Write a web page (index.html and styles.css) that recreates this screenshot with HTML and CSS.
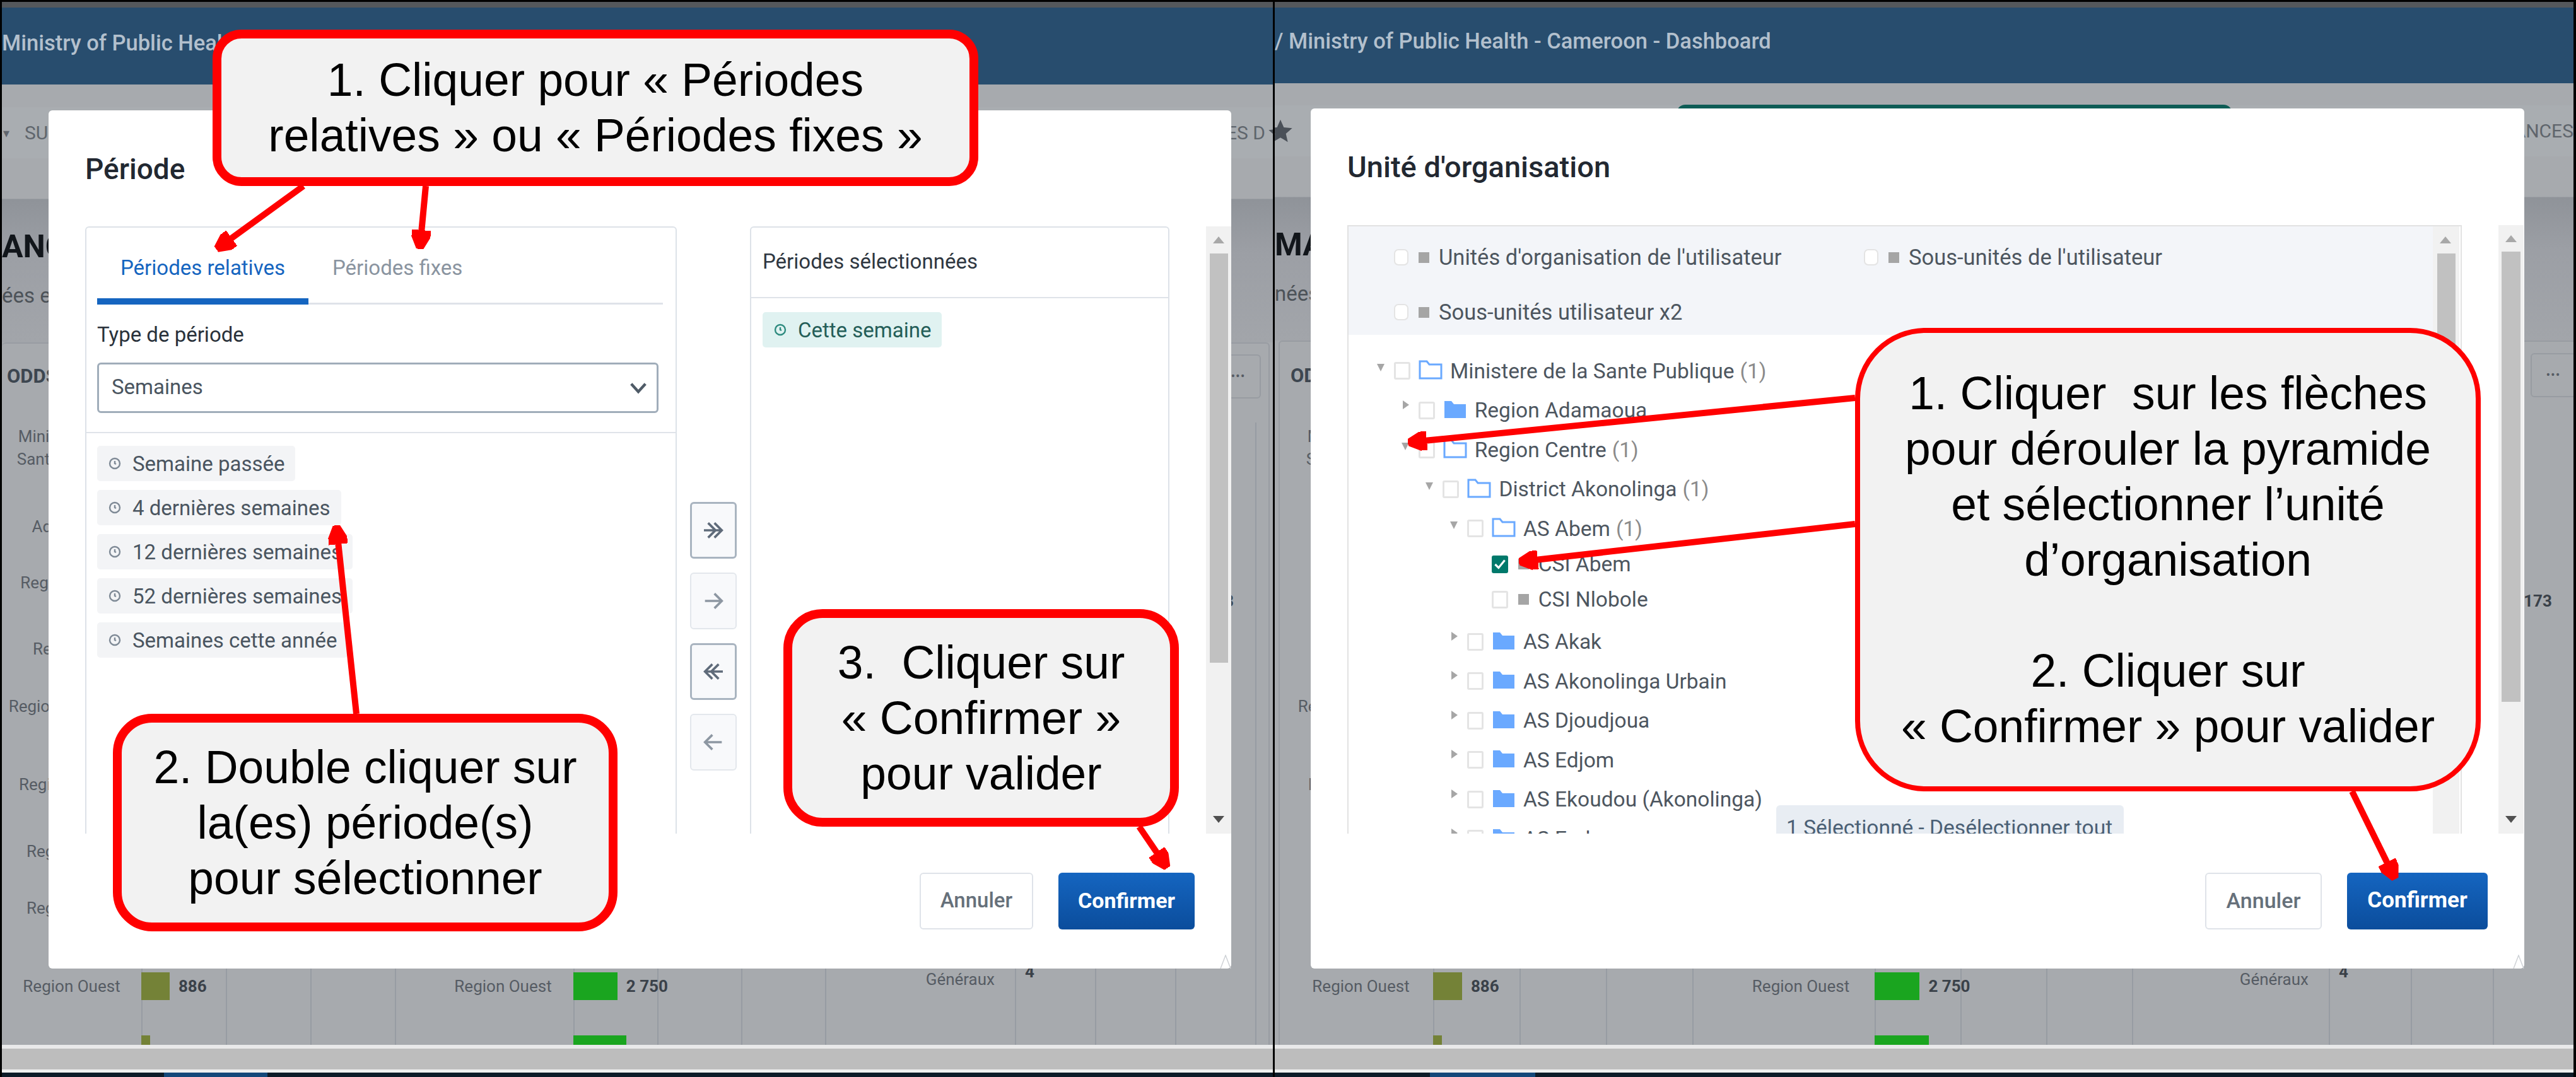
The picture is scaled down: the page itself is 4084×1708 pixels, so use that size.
FILE: index.html
```html
<!DOCTYPE html>
<html lang="fr">
<head>
  <meta charset="utf-8">
  <title>Sélection de la période et de l'unité d'organisation</title>
  <link rel="stylesheet" href="styles.css">
</head>
<body>
<div class="page">

  <!-- LEFT SCREEN : period dialog -->
  <section class="screen screen--left">
    <div class="topline"></div>
    <header class="app-bar"><span>Ministry of Public Health - Cameroon - Dashboard</span></header>
    <nav class="sub-nav">
      <span class="nav-caret">▾</span>
      <span class="nav-item nav-item--first">SUIVI DES SERVICES</span>
      <span class="nav-item nav-item--end">PERFORMANCES D</span>
      <svg class="nav-star" viewBox="0 0 24 24"><path d="M12 1l3.2 7.4 8 .7-6 5.3 1.8 7.9L12 18.100l-7 4.200 1.800-7.900-6-5.300 8-.7z"/></svg>
    </nav>
    <div class="intro">
      <h1>ANCE</h1>
      <p>ées et</p>
    </div>
    <div class="cards">
      <article class="card">
        <div class="card-head"><b>ODDS</b></div>
        <div class="chart">
          <div class="chart-label">Ministere de la<br>Sante Publique</div><div></div>
          <div class="chart-label">Adamaoua</div><div></div>
          <div class="chart-label">Region Centre</div><div></div>
          <div class="chart-label">Region Est</div><div></div>
          <div class="chart-label">Region Extr. Nord</div><div></div>
          <div class="chart-label">Region Littoral</div><div></div>
          <div class="chart-label">Region Nord</div><div></div>
          <div class="chart-label">Region Nord</div><div></div>
          <div class="chart-label">Region Ouest</div>
          <div class="bar-row"><span class="bar bar--olive" style="width:calc(var(--tick) * .335)"></span><b class="value">886</b></div>
          <div></div>
          <div class="bar-row"><span class="bar bar--olive" style="width:calc(var(--tick) * .105)"></span></div>
        </div>
      </article>
      <article class="card">
        <div class="card-head"></div>
        <div class="chart">
          <div class="chart-spacer"></div>
          <div class="chart-label">Region Ouest</div>
          <div class="bar-row"><span class="bar bar--green" style="width:calc(var(--tick) * .525)"></span><b class="value">2 750</b></div>
          <div></div>
          <div class="bar-row"><span class="bar bar--green" style="width:calc(var(--tick) * .63)"></span></div>
        </div>
      </article>
      <article class="card">
        <div class="card-head"><span class="more-btn">•••</span></div>
        <div class="chart chart--staff">
          <div></div><div></div>
          <div class="chart-label chart-label--end">Infirmiers</div>
          <div class="bar-row"><span class="bar bar--green" style="width:calc(var(--tick) * 2.27)"></span><b class="value">173</b></div>
          <div class="chart-label chart-label--end">Médecins<br>Généraux</div>
          <div class="bar-row bar-row--low"><b class="value">4</b></div>
        </div>
      </article>
    </div>
    <div class="h-scroll"></div>
    <div class="taskbar"><span class="task-active"></span></div>

    <div class="modal">
      <h2 class="modal-title">Période</h2>
      <div class="transfer">
        <div class="panel panel--source">
          <div class="tabs">
            <span class="tab tab--active">Périodes relatives</span>
            <span class="tab">Périodes fixes</span>
          </div>
          <div class="field">
            <label class="field-label">Type de période</label>
            <div class="select">Semaines
              <svg class="chevron" viewBox="0 0 24 24"><path d="M3 7l9 10 9-10"/></svg>
            </div>
          </div>
          <ul class="chip-list">
            <li class="chip"><svg class="clock" viewBox="0 0 20 20"><circle cx="10" cy="10" r="8"/><path d="M10 6v4l2 1"/></svg>Semaine passée</li>
            <li class="chip"><svg class="clock" viewBox="0 0 20 20"><circle cx="10" cy="10" r="8"/><path d="M10 6v4l2 1"/></svg>4 dernières semaines</li>
            <li class="chip"><svg class="clock" viewBox="0 0 20 20"><circle cx="10" cy="10" r="8"/><path d="M10 6v4l2 1"/></svg>12 dernières semaines</li>
            <li class="chip"><svg class="clock" viewBox="0 0 20 20"><circle cx="10" cy="10" r="8"/><path d="M10 6v4l2 1"/></svg>52 dernières semaines</li>
            <li class="chip"><svg class="clock" viewBox="0 0 20 20"><circle cx="10" cy="10" r="8"/><path d="M10 6v4l2 1"/></svg>Semaines cette année</li>
          </ul>
        </div>
        <div class="transfer-actions">
          <span class="move-btn move-btn--on"><svg viewBox="0 0 24 24"><path d="M3 12h16M7 5l7 7-7 7M13 5l7 7-7 7"/></svg></span>
          <span class="move-btn"><svg viewBox="0 0 24 24"><path d="M4 12h16M13 5l7 7-7 7"/></svg></span>
          <span class="move-btn move-btn--on"><svg viewBox="0 0 24 24"><path d="M21 12H5M17 5l-7 7 7 7M11 5l-7 7 7 7"/></svg></span>
          <span class="move-btn"><svg viewBox="0 0 24 24"><path d="M20 12H4M11 5l-7 7 7 7"/></svg></span>
        </div>
        <div class="panel panel--picked">
          <div class="panel-head">Périodes sélectionnées</div>
          <ul class="chip-list chip-list--picked">
            <li class="chip chip--picked"><svg class="clock" viewBox="0 0 20 20"><circle cx="10" cy="10" r="8"/><path d="M10 6v4l2 1"/></svg>Cette semaine</li>
          </ul>
        </div>
        <div class="scrollbar scrollbar--outer"><span class="scroll-up"></span><span class="scroll-thumb"></span><span class="scroll-down"></span></div>
      </div>
      <div class="modal-footer">
        <span class="btn btn--cancel">Annuler</span>
        <span class="btn btn--confirm">Confirmer</span>
      </div>
      <svg class="resize-grip" viewBox="0 0 18 22"><path d="M1 22L9 1l8 21"/></svg>
    </div>
  </section>

  <!-- RIGHT SCREEN : org unit dialog -->
  <section class="screen screen--right">
    <div class="topline"></div>
    <header class="app-bar"><span>/ Ministry of Public Health - Cameroon - Dashboard</span></header>
    <nav class="sub-nav">
      <svg class="nav-star" viewBox="0 0 24 24"><path d="M12 1l3.2 7.4 8 .7-6 5.3 1.8 7.9L12 18.100l-7 4.200 1.800-7.900-6-5.300 8-.7z"/></svg>
      <span class="nav-pill"></span>
      <span class="nav-item nav-item--end">PERFORMANCES</span>
    </nav>
    <div class="intro">
      <h1>MANCE</h1>
      <p>nées</p>
    </div>
    <div class="cards">
      <article class="card">
        <div class="card-head"><b>ODDS</b></div>
        <div class="chart">
          <div class="chart-label">Ministere de la<br>Sante Publique</div><div></div>
          <div class="chart-label">Adamaoua</div><div></div>
          <div class="chart-label">Region Centre</div><div></div>
          <div class="chart-label">Region Est</div><div></div>
          <div class="chart-label">Region Extr. Nord</div><div></div>
          <div class="chart-label">Region Littoral</div><div></div>
          <div class="chart-label">Region Nord</div><div></div>
          <div class="chart-label">Region Nord</div><div></div>
          <div class="chart-label">Region Ouest</div>
          <div class="bar-row"><span class="bar bar--olive" style="width:calc(var(--tick) * .335)"></span><b class="value">886</b></div>
          <div></div>
          <div class="bar-row"><span class="bar bar--olive" style="width:calc(var(--tick) * .105)"></span></div>
        </div>
      </article>
      <article class="card">
        <div class="card-head"></div>
        <div class="chart">
          <div class="chart-spacer"></div>
          <div class="chart-label">Region Ouest</div>
          <div class="bar-row"><span class="bar bar--green" style="width:calc(var(--tick) * .525)"></span><b class="value">2 750</b></div>
          <div></div>
          <div class="bar-row"><span class="bar bar--green" style="width:calc(var(--tick) * .63)"></span></div>
        </div>
      </article>
      <article class="card">
        <div class="card-head"><span class="more-btn">•••</span></div>
        <div class="chart chart--staff">
          <div></div><div></div>
          <div class="chart-label chart-label--end">Infirmiers</div>
          <div class="bar-row"><span class="bar bar--green" style="width:calc(var(--tick) * 2.27)"></span><b class="value">173</b></div>
          <div class="chart-label chart-label--end">Médecins<br>Généraux</div>
          <div class="bar-row bar-row--low"><b class="value">4</b></div>
        </div>
      </article>
    </div>
    <div class="h-scroll"></div>
    <div class="taskbar"><span class="task-active"></span></div>

    <div class="modal">
      <h2 class="modal-title">Unité d'organisation</h2>
      <div class="transfer">
        <div class="org-box">
          <div class="org-main">
            <div class="org-levels">
              <label class="org-level"><span class="check check--round"></span><span class="leaf-mark"></span>Unités d'organisation de l'utilisateur</label>
              <label class="org-level"><span class="check check--round"></span><span class="leaf-mark"></span>Sous-unités de l'utilisateur</label>
              <label class="org-level"><span class="check check--round"></span><span class="leaf-mark"></span>Sous-unités utilisateur x2</label>
            </div>
            <ul class="tree">
              <li class="tree-row"><span class="toggle toggle--open"></span><span class="check"></span><svg class="folder folder--open" viewBox="0 0 38 32"><path d="M2 30V3h11l4 5h19v22z"/></svg>Ministere de la Sante Publique <em>(1)</em></li>
              <li class="tree-row lvl-1"><span class="toggle"></span><span class="check"></span><svg class="folder" viewBox="0 0 38 32"><path d="M2 30V3h11l4 5h19v22z"/></svg>Region Adamaoua</li>
              <li class="tree-row lvl-1"><span class="toggle toggle--open"></span><span class="check"></span><svg class="folder folder--open" viewBox="0 0 38 32"><path d="M2 30V3h11l4 5h19v22z"/></svg>Region Centre <em>(1)</em></li>
              <li class="tree-row lvl-2"><span class="toggle toggle--open"></span><span class="check"></span><svg class="folder folder--open" viewBox="0 0 38 32"><path d="M2 30V3h11l4 5h19v22z"/></svg>District Akonolinga <em>(1)</em></li>
              <li class="tree-row lvl-3"><span class="toggle toggle--open"></span><span class="check"></span><svg class="folder folder--open" viewBox="0 0 38 32"><path d="M2 30V3h11l4 5h19v22z"/></svg>AS Abem <em>(1)</em></li>
              <li class="tree-row tree-row--leaf lvl-4"><span class="check check--on"><svg viewBox="0 0 24 24"><path d="M5 12l5 5 9-11"/></svg></span><span class="leaf-mark"></span>CSI Abem</li>
              <li class="tree-row tree-row--leaf tree-row--last-leaf lvl-4"><span class="check"></span><span class="leaf-mark"></span>CSI Nlobole</li>
              <li class="tree-row lvl-3"><span class="toggle"></span><span class="check"></span><svg class="folder" viewBox="0 0 38 32"><path d="M2 30V3h11l4 5h19v22z"/></svg>AS Akak</li>
              <li class="tree-row lvl-3"><span class="toggle"></span><span class="check"></span><svg class="folder" viewBox="0 0 38 32"><path d="M2 30V3h11l4 5h19v22z"/></svg>AS Akonolinga Urbain</li>
              <li class="tree-row lvl-3"><span class="toggle"></span><span class="check"></span><svg class="folder" viewBox="0 0 38 32"><path d="M2 30V3h11l4 5h19v22z"/></svg>AS Djoudjoua</li>
              <li class="tree-row lvl-3"><span class="toggle"></span><span class="check"></span><svg class="folder" viewBox="0 0 38 32"><path d="M2 30V3h11l4 5h19v22z"/></svg>AS Edjom</li>
              <li class="tree-row lvl-3"><span class="toggle"></span><span class="check"></span><svg class="folder" viewBox="0 0 38 32"><path d="M2 30V3h11l4 5h19v22z"/></svg>AS Ekoudou (Akonolinga)</li>
              <li class="tree-row lvl-3"><span class="toggle"></span><span class="check"></span><svg class="folder" viewBox="0 0 38 32"><path d="M2 30V3h11l4 5h19v22z"/></svg>AS Endom</li>
            </ul>
            <span class="selection-tag">1 Sélectionné - Desélectionner tout</span>
          </div>
          <div class="scrollbar scrollbar--inner"><span class="scroll-up"></span><span class="scroll-thumb"></span></div>
        </div>
        <div class="scrollbar scrollbar--outer"><span class="scroll-up"></span><span class="scroll-thumb"></span><span class="scroll-down"></span></div>
      </div>
      <div class="modal-footer">
        <span class="btn btn--cancel">Annuler</span>
        <span class="btn btn--confirm">Confirmer</span>
      </div>
      <svg class="resize-grip" viewBox="0 0 18 22"><path d="M1 22L9 1l8 21"/></svg>
    </div>
  </section>

  <!-- annotation arrows -->
  <svg class="arrows" viewBox="0 0 4084 1708">
    <defs>
      <marker id="head" markerUnits="userSpaceOnUse" markerWidth="30" markerHeight="30" viewBox="0 0 30 30" refX="4" refY="15" orient="auto">
        <path d="M0 0L30 15L0 30z" fill="#f00"/>
      </marker>
    </defs>
    <line x1="481" y1="295" x2="364" y2="380" marker-end="url(#head)"/>
    <line x1="675" y1="295" x2="668" y2="369" marker-end="url(#head)"/>
    <line x1="565" y1="1132" x2="536" y2="859" marker-end="url(#head)"/>
    <line x1="1806" y1="1311" x2="1836" y2="1355" marker-end="url(#head)"/>
    <line x1="2941" y1="631" x2="2258" y2="699" marker-end="url(#head)"/>
    <line x1="2941" y1="831" x2="2434" y2="888" marker-end="url(#head)"/>
    <line x1="3729" y1="1255" x2="3786" y2="1371" marker-end="url(#head)"/>
  </svg>

  <div class="callout callout--tabs">1. Cliquer pour « Périodes<br>relatives » ou « Périodes fixes »</div>
  <div class="callout callout--pick">2. Double cliquer sur<br>la(es) période(s)<br>pour sélectionner</div>
  <div class="callout callout--ok">3.&nbsp; Cliquer sur<br>« Confirmer »<br>pour valider</div>
  <div class="callout callout--org">1. Cliquer&nbsp; sur les flèches<br>pour dérouler la pyramide<br>et sélectionner l’unité<br>d’organisation<br>&nbsp;<br>2. Cliquer sur<br>« Confirmer » pour valider</div>
</div>
</body>
</html>
```

FILE: styles.css
```css
* { box-sizing: border-box; }
html, body { margin: 0; padding: 0; }
body {
  width: 4084px;
  height: 1708px;
  overflow: hidden;
  font-family: Roboto, "Liberation Sans", sans-serif;
  background: #000;
}
h1, h2, p, ul { margin: 0; padding: 0; }
ul { list-style: none; }

.page {
  position: relative;
  display: flex;
  gap: 3px;
  width: 4084px;
  height: 1708px;
  padding: 3px 4px 0 3px;
  background: #000;
}

/* dashboard behind the dialogs */
.screen {
  position: relative;
  display: flex;
  flex-direction: column;
  height: 100%;
  overflow: hidden;
  background: #a7aaae;
}
.screen--left { width: 2015px; }
.screen--right { width: 2059px; }

.topline { flex: none; height: 9px; background: #55585c; }
.app-bar {
  display: flex;
  flex: none;
  align-items: center;
  height: 122px;
  padding-bottom: 10px;
  background: #284d6e;
  color: #b3c0cd;
  font-size: 34.5px;
  font-weight: 500;
  white-space: nowrap;
}
.screen--right .app-bar { height: 120px; padding-bottom: 14px; }

.sub-nav {
  display: flex;
  flex: none;
  align-items: center;
  height: 81px;
  margin-top: 36px;
  background: #a9adb1;
  color: #5f656c;
  font-size: 30px;
  white-space: nowrap;
}
.screen--right .sub-nav { margin-top: 35px; }
.nav-caret { width: 36px; padding-left: 2px; font-size: 20px; }
.nav-item--end { margin-left: auto; }
.nav-star { width: 40px; height: 40px; flex: none; fill: #4a5058; }
.screen--left .nav-star { margin-right: -32px; margin-left: 4px; }
.screen--right .nav-star { margin-left: -11px; }
.nav-pill {
  align-self: flex-start;
  width: 881px;
  height: 30px;
  margin-top: -1px;
  margin-left: 608px;
  border-radius: 14px 14px 0 0;
  background: #0d5c55;
}

.intro {
  flex: none;
  height: 292px;
  padding-top: 110px;
  background: linear-gradient(#a7aaae 0, #a7aaae 64px, #8f9399 65px, #9c9fa5 150px, #a2a5aa 100%);
}
.intro h1 {
  height: 60px;
  color: #12161b;
  font-size: 50px;
  font-weight: 700;
  line-height: 60px;
}
.intro p {
  margin-top: 30px;
  color: #4d5359;
  font-size: 33px;
  line-height: 36px;
}

.cards { display: flex; flex: 1; min-height: 0; overflow: hidden; }
.card {
  flex: none;
  display: flex;
  flex-direction: column;
  border-top: 2px solid #989ca2;
  border-radius: 6px 6px 0 0;
}
.screen--left .card:nth-child(1) { width: 644px; --label-w: 221px; --tick: 134px; }
.screen--left .card:nth-child(2) { width: 661px; margin-left: 23px; --label-w: 239px; --tick: 133px; --label-pad: 16px; }
.screen--left .card:nth-child(3) { width: 662px; margin-left: 20px; --label-w: 258px; --tick: 127px; border-right: 2px solid #989ca2; }
.screen--right .card:nth-child(1) { width: 677px; margin-left: 6px; --label-w: 243px; --tick: 137px; --label-pad: 14px; border-left: 2px solid #989ca2; }
.screen--right .card:nth-child(2) { width: 677px; margin-left: 24px; --label-w: 244px; --tick: 136px; --label-pad: 10px; }
.screen--right .card:nth-child(3) { width: 668px; margin-left: 23px; --label-w: 264px; --tick: 130px; }

.card-head {
  display: flex;
  flex: none;
  align-items: center;
  justify-content: space-between;
  height: 125px;
  padding: 0 12px 22px 8px;
  color: #3d4650;
  font-size: 31px;
}
.screen--right .card-head { height: 128px; padding-left: 17px; }
.more-btn {
  width: 72px;
  height: 70px;
  margin-left: auto;
  border: 2px solid #989ca2;
  border-radius: 6px;
  color: #565c64;
  font-size: 20px;
  letter-spacing: 1px;
  line-height: 64px;
  text-align: center;
}

.chart {
  display: grid;
  flex: none;
  height: 1100px;
  grid-template-columns: var(--label-w) 1fr;
  grid-template-rows: 143px 89px 105px 91px 124px 106px 90px 124px 100px 60px;
  background: repeating-linear-gradient(90deg, #979ca3 0 2px, transparent 2px var(--tick)) right top / calc(100% - var(--label-w)) 100% no-repeat;
}
.chart--staff { grid-template-rows: 261px 564px 1fr; }
.chart-spacer { grid-column: 1 / -1; grid-row: 1 / span 8; }
.chart-label {
  margin-top: 4px;
  padding-left: var(--label-pad, 0);
  color: #565c64;
  font-size: 26px;
  line-height: 36px;
  text-align: center;
  white-space: nowrap;
}
.chart-label--end { padding-right: 32px; text-align: right; }
.bar-row { display: flex; align-items: center; height: 44px; }
.bar-row--low { margin-top: 24px; margin-left: 16px; }
.bar { height: 100%; }
.bar--olive { background: #748237; }
.bar--green { background: #1aa51f; }
.value { margin-left: 14px; color: #3a4149; font-size: 26px; }
.bar-row--low .value { margin-left: 0; }

.h-scroll {
  flex: none;
  height: 44px;
  border-top: 6px solid #e9e9ea;
  border-bottom: 5px solid #f0f0f0;
  background: #bdbdbd;
}
.taskbar { flex: none; height: 7px; background: #0d1b28; }
.task-active { display: block; width: 164px; height: 100%; margin-left: 257px; background: #14487a; }
.screen--right .task-active { width: 167px; margin-left: 246px; }

/* dialog */
.modal {
  position: absolute;
  left: 74px;
  top: 172px;
  display: flex;
  flex-direction: column;
  width: 1875px;
  height: 1361px;
  padding: 0 0 0 58px;
  border-radius: 6px;
  background: #fff;
}
.screen--right .modal { left: 57px; top: 169px; width: 1924px; height: 1364px; }
.modal-title {
  flex: none;
  height: 184px;
  padding-top: 68px;
  color: #222831;
  font-size: 46px;
  font-weight: 500;
  line-height: 50px;
}
.screen--right .modal-title { height: 185px; font-size: 47px; }

.transfer { display: flex; flex: none; height: 963px; overflow: hidden; }
.screen--right .transfer { height: 965px; }
.panel {
  flex: none;
  height: 1000px;
  border: 2px solid #dde2e8;
  border-radius: 6px;
  color: #4a5560;
  font-size: 33px;
}
.panel--source { width: 938px; }
.panel--picked { width: 665px; }

.tabs {
  display: flex;
  height: 122px;
  margin: 0 20px 0 17px;
  border-bottom: 3px solid #dfe3e9;
}
.tab {
  padding: 46px 0 0 38px;
  color: #8a94a0;
  line-height: 36px;
}
.tab--active {
  width: 335px;
  height: 122px;
  padding-left: 0;
  border-bottom: 10px solid #1565c0;
  color: #1565c0;
  text-align: center;
}
.field { padding: 29px 27px 30px 17px; border-bottom: 2px solid #dfe3e9; }
.field-label { display: block; color: #2a323b; line-height: 38px; }
.select {
  position: relative;
  height: 80px;
  margin-top: 25px;
  padding-left: 20px;
  border: 3px solid #a0adba;
  border-radius: 6px;
  line-height: 72px;
}
.chevron {
  position: absolute;
  right: 14px;
  top: 22px;
  width: 30px;
  height: 30px;
  fill: none;
  stroke: #4f5b67;
  stroke-width: 3.5;
}

.chip-list {
  display: flex;
  flex-direction: column;
  align-items: flex-start;
  gap: 14px;
  padding: 20px 0 0 17px;
}
.chip-list--picked { padding: 22px 0 0 18px; }
.chip {
  display: flex;
  align-items: center;
  gap: 18px;
  height: 56px;
  padding: 0 17px 0 18px;
  border-radius: 5px;
  background: #f3f4f6;
  white-space: nowrap;
}
.chip--picked { background: #e0f2f1; color: #245e58; }
.clock { width: 20px; height: 20px; flex: none; fill: none; stroke: #7f8a96; stroke-width: 2.4; }
.chip--picked .clock { stroke: #2e8b7f; }

.transfer-actions {
  display: flex;
  flex: none;
  flex-direction: column;
  gap: 22px;
  width: 116px;
  padding: 437px 21px 0;
}
.move-btn {
  display: flex;
  align-items: center;
  justify-content: center;
  height: 90px;
  border: 2px solid #e3e7ec;
  border-radius: 6px;
  background: #f8f9fb;
}
.move-btn--on { border: 3px solid #a9b4c0; }
.move-btn svg { width: 40px; height: 40px; fill: none; stroke: #8d97a2; stroke-width: 2.2; }
.move-btn--on svg { stroke: #5f6b7a; }

.panel-head {
  height: 112px;
  padding: 36px 0 0 18px;
  border-bottom: 2px solid #dfe3e9;
  color: #2f3741;
  line-height: 36px;
}

.scrollbar { position: relative; flex: none; width: 40px; background: #f1f1f1; }
.scrollbar--outer { margin-left: 58px; }
.scroll-thumb {
  display: block;
  width: 29px;
  margin: 43px auto 0;
  background: #c1c1c1;
}
.scrollbar--outer .scroll-thumb { height: 649px; }
.screen--right .scrollbar--outer .scroll-thumb { height: 714px; margin-top: 42px; width: 30px; }
.scrollbar--inner { width: 42px; margin-right: 2px; }
.scrollbar--inner .scroll-thumb { height: 700px; }
.scroll-up, .scroll-down {
  position: absolute;
  left: 11px;
  width: 0;
  height: 0;
  border-left: 9px solid transparent;
  border-right: 9px solid transparent;
}
.scroll-up { top: 16px; border-bottom: 11px solid #a8a8a8; }
.scroll-down { bottom: 17px; border-top: 11px solid #505050; }

.modal-footer {
  display: flex;
  flex: none;
  justify-content: flex-end;
  gap: 40px;
  margin-top: 62px;
  padding-right: 58px;
}
.btn {
  height: 90px;
  border-radius: 6px;
  font-size: 33px;
  font-weight: 500;
  line-height: 84px;
  text-align: center;
}
.btn--cancel { width: 180px; border: 2px solid #dfe3e9; color: #66707a; }
.btn--confirm {
  width: 216px;
  background: linear-gradient(#1565c0, #0b4d9c);
  color: #fff;
  font-size: 34px;
  font-weight: 700;
  line-height: 88px;
}
.screen--right .btn--cancel { width: 185px; font-size: 34px; }
.screen--right .btn--confirm { width: 223px; font-size: 35px; }
.resize-grip {
  position: absolute;
  right: 0;
  bottom: 0;
  width: 18px;
  height: 22px;
  fill: none;
  stroke: #cfd2d6;
  stroke-width: 1.5;
}

/* org unit tree */
.org-box {
  display: flex;
  flex: none;
  width: 1767px;
  height: 1000px;
  border: 2px solid #e2e2e2;
  color: #4d565f;
  font-size: 33.500px;
}
.org-main { position: relative; flex: 1; min-width: 0; }
.org-levels {
  display: grid;
  align-content: start;
  grid-template-columns: 745px 1fr;
  row-gap: 43px;
  height: 172px;
  padding: 27px 0 0 72px;
  background: #f3f5f9;
  font-size: 34.500px;
}
.org-level { display: flex; align-items: center; height: 44px; white-space: nowrap; }
.check {
  display: inline-flex;
  flex: none;
  width: 26px;
  height: 28px;
  border: 3px solid #e4e4e4;
  border-radius: 3px;
  background: #fff;
}
.check--round { width: 23px; height: 26px; border-width: 2px; border-radius: 7px; }
.check--on { border: 0; border-radius: 3px; background: #00796b; }
.check--on svg { width: 100%; height: 100%; fill: none; stroke: #fff; stroke-width: 3; }
.leaf-mark { flex: none; width: 17px; height: 17px; margin: 0 15px 0 16px; background: #a5a5a5; }

.tree { padding: 26px 0 0 45px; white-space: nowrap; }
.tree-row { display: flex; align-items: center; height: 62.5px; }
.tree-row em { margin-left: 9px; color: #8b8b8b; font-style: normal; }
.tree-row--leaf { height: 56px; margin-top: 0; padding-left: 27px; }
.tree-row--leaf:nth-child(6) { margin-top: -3px; }
.tree-row--last-leaf { margin-bottom: 8px; }
.lvl-1 { margin-left: 38.7px; }
.lvl-2 { margin-left: 77.4px; }
.lvl-3 { margin-left: 116px; }
.lvl-4 { margin-left: 154.7px; }
.toggle {
  flex: none;
  align-self: flex-start;
  width: 0;
  height: 0;
  margin: 15px 15px 0 2px;
  border-top: 7px solid transparent;
  border-bottom: 7px solid transparent;
  border-left: 10px solid #a6a6a6;
}
.toggle--open {
  margin: 20px 15px 0 0;
  border: 0 solid transparent;
  border-left-width: 6px;
  border-right-width: 6px;
  border-top: 12px solid #a6a6a6;
}
.folder { flex: none; width: 38px; height: 32px; margin: -4px 12px 0 13px; fill: #6aa9ff; }
.folder--open { fill: none; stroke: #6aa9ff; stroke-width: 3; }
.selection-tag {
  position: absolute;
  left: 678px;
  top: 918px;
  height: 60px;
  padding: 16px 18px 0 16px;
  border-radius: 6px;
  background: #e8edf3;
  color: #4b6075;
  white-space: nowrap;
}

/* annotations drawn on top of the screenshot */
.arrows {
  position: absolute;
  left: 0;
  top: 0;
  width: 4084px;
  height: 1708px;
  stroke: #f00;
  stroke-width: 10;
}
.callout {
  position: absolute;
  display: flex;
  align-items: center;
  justify-content: center;
  border: 14px solid #f00;
  background: #f2f2f2;
  color: #000;
  font-family: "Liberation Sans", Arial, sans-serif;
  font-size: 73.2px;
  line-height: 88px;
  text-align: center;
  white-space: nowrap;
}
.callout--tabs { left: 337px; top: 47px; width: 1214px; height: 248px; border-radius: 46px; }
.callout--pick { left: 179px; top: 1132px; width: 800px; height: 345px; border-radius: 62px; }
.callout--ok { left: 1242px; top: 966px; width: 627px; height: 345px; border-radius: 62px; }
.callout--org { left: 2941px; top: 520px; width: 992px; height: 735px; border-width: 8px; border-radius: 112px; }
```
